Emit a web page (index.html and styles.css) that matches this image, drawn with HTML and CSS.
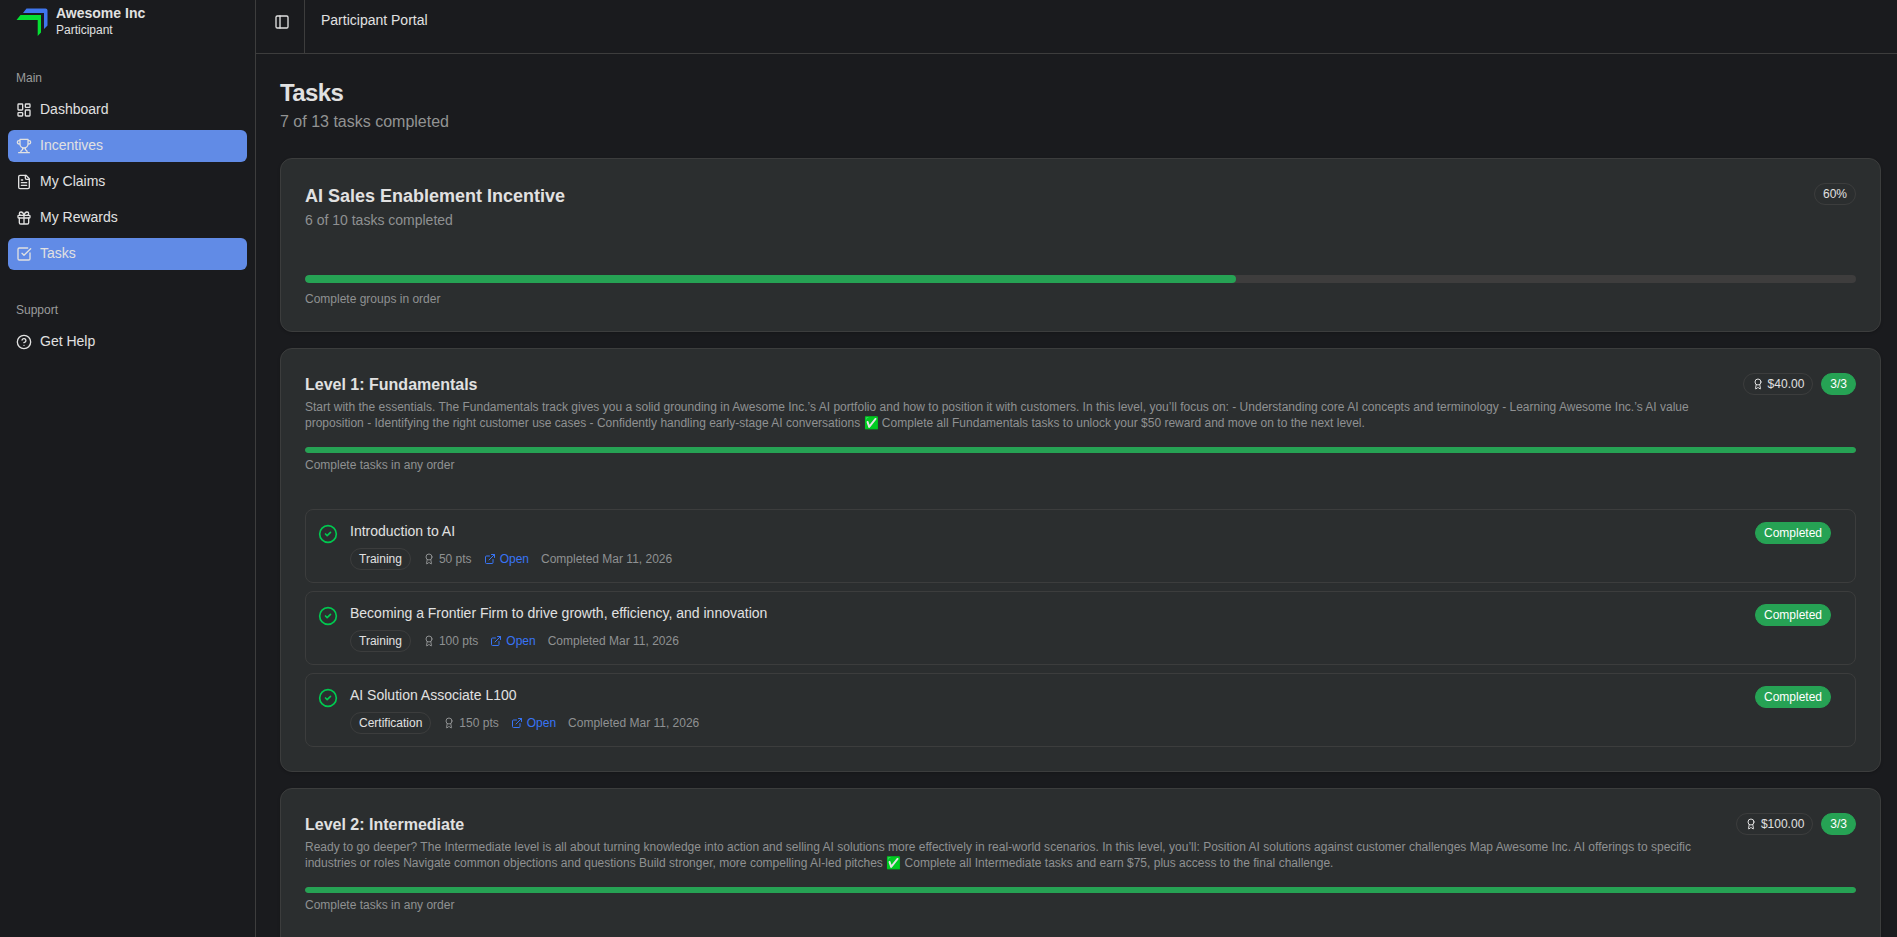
FILE: index.html
```html
<!DOCTYPE html>
<html lang="en">
<head>
    <meta charset="UTF-8">
    <meta name="viewport" content="width=device-width, initial-scale=1.0">
    <title>Tasks - Participant Portal</title>
    <link rel="stylesheet" href="styles.css">
</head>
<body>
    <svg class="sprite" aria-hidden="true">
        <symbol id="award" viewBox="0 0 24 24">
            <path d="m15.477 12.89 1.515 8.526a.5.5 0 0 1-.81.47l-3.58-2.687a1 1 0 0 0-1.197 0l-3.586 2.686a.5.5 0 0 1-.81-.469l1.514-8.526"/>
            <circle cx="12" cy="8" r="6"/>
        </symbol>
        <symbol id="external" viewBox="0 0 24 24">
            <path d="M15 3h6v6M10 14 21 3M18 13v6a2 2 0 0 1-2 2H5a2 2 0 0 1-2-2V8a2 2 0 0 1 2-2h6"/>
        </symbol>
        <symbol id="circle-check" viewBox="0 0 24 24">
            <circle cx="12" cy="12" r="10"/>
            <path d="m9 12 2 2 4-4"/>
        </symbol>
    </svg>

    <div class="layout">
        <aside class="sidebar">
            <div class="brand">
                <svg class="logo" viewBox="0 0 32 28">
                    <path d="M10.5 0.5H29.5q2 0 2 2v15L28 21V5H7z" fill="#3f76ee"/>
                    <path d="M4.5 7H25v17.5L21.7 28V12H0.5z" fill="#05df33"/>
                </svg>
                <div class="brand-text">
                    <strong>Awesome Inc</strong>
                    <span>Participant</span>
                </div>
            </div>

            <nav class="nav">
                <div class="nav-label">Main</div>
                <a class="nav-item">
                    <svg class="icon" viewBox="0 0 24 24"><rect width="7" height="9" x="3" y="3" rx="1"/><rect width="7" height="5" x="14" y="3" rx="1"/><rect width="7" height="9" x="14" y="12" rx="1"/><rect width="7" height="5" x="3" y="16" rx="1"/></svg>
                    <span>Dashboard</span>
                </a>
                <a class="nav-item active">
                    <svg class="icon" viewBox="0 0 24 24"><path d="M6 9H4.5a2.5 2.5 0 0 1 0-5H6M18 9h1.5a2.5 2.5 0 0 0 0-5H18M4 22h16M10 14.66V17c0 .55-.47.98-.97 1.21C7.85 18.75 7 20.24 7 22M14 14.66V17c0 .55.47.98.97 1.21C16.15 18.75 17 20.24 17 22M18 2H6v7a6 6 0 0 0 12 0V2Z"/></svg>
                    <span>Incentives</span>
                </a>
                <a class="nav-item">
                    <svg class="icon" viewBox="0 0 24 24"><path d="M15 2H6a2 2 0 0 0-2 2v16a2 2 0 0 0 2 2h12a2 2 0 0 0 2-2V7Z"/><path d="M14 2v4a2 2 0 0 0 2 2h4M10 9H8M16 13H8M16 17H8"/></svg>
                    <span>My Claims</span>
                </a>
                <a class="nav-item">
                    <svg class="icon" viewBox="0 0 24 24"><rect x="3" y="8" width="18" height="4" rx="1"/><path d="M12 8v13M19 12v7a2 2 0 0 1-2 2H7a2 2 0 0 1-2-2v-7M7.5 8a2.5 2.5 0 0 1 0-5A4.8 8 0 0 1 12 8a4.8 8 0 0 1 4.5-5 2.5 2.5 0 0 1 0 5"/></svg>
                    <span>My Rewards</span>
                </a>
                <a class="nav-item active">
                    <svg class="icon" viewBox="0 0 24 24"><path d="M21 10.5V19a2 2 0 0 1-2 2H5a2 2 0 0 1-2-2V5a2 2 0 0 1 2-2h12.5"/><path d="m9 11 3 3L22 4"/></svg>
                    <span>Tasks</span>
                </a>
            </nav>

            <nav class="nav">
                <div class="nav-label">Support</div>
                <a class="nav-item">
                    <svg class="icon" viewBox="0 0 24 24"><circle cx="12" cy="12" r="10"/><path d="M9.09 9a3 3 0 0 1 5.83 1c0 2-3 3-3 3M12 17h.01"/></svg>
                    <span>Get Help</span>
                </a>
            </nav>
        </aside>

        <main class="main">
            <header class="topbar">
                <button class="toggle">
                    <svg class="icon" viewBox="0 0 24 24"><rect width="18" height="18" x="3" y="3" rx="2"/><path d="M9 3v18"/></svg>
                </button>
                <span class="portal-name">Participant Portal</span>
            </header>

            <div class="content">
                <h1>Tasks</h1>
                <p class="subtitle">7 of 13 tasks completed</p>

                <section class="card summary">
                    <div class="card-header">
                        <div>
                            <h2>AI Sales Enablement Incentive</h2>
                            <p class="summary-count">6 of 10 tasks completed</p>
                        </div>
                        <span class="badge">60%</span>
                    </div>
                    <div class="progress"><div class="progress-fill" style="width: 60%"></div></div>
                    <p class="hint">Complete groups in order</p>
                </section>

                <section class="card level">
                    <div class="card-header">
                        <div>
                            <h3>Level 1: Fundamentals</h3>
                            <p class="description">Start with the essentials. The Fundamentals track gives you a solid grounding in Awesome Inc.’s AI portfolio and how to position it with customers. In this level, you’ll focus on: - Understanding core AI concepts and terminology - Learning Awesome Inc.’s AI value proposition - Identifying the right customer use cases - Confidently handling early-stage AI conversations <span class="emoji">✅</span> Complete all Fundamentals tasks to unlock your $50 reward and move on to the next level.</p>
                        </div>
                        <div class="badges">
                            <span class="badge"><svg class="icon small"><use href="#award"/></svg>$40.00</span>
                            <span class="badge green">3/3</span>
                        </div>
                    </div>
                    <div class="progress"><div class="progress-fill" style="width: 100%"></div></div>
                    <p class="hint">Complete tasks in any order</p>

                    <div class="tasks">
                        <div class="task">
                            <svg class="icon task-check"><use href="#circle-check"/></svg>
                            <div class="task-body">
                                <div class="task-title">Introduction to AI</div>
                                <div class="task-meta">
                                    <span class="badge">Training</span>
                                    <span class="meta-item"><svg class="icon small"><use href="#award"/></svg>50 pts</span>
                                    <a class="meta-item link"><svg class="icon small"><use href="#external"/></svg>Open</a>
                                    <span>Completed Mar 11, 2026</span>
                                </div>
                            </div>
                            <span class="badge green">Completed</span>
                        </div>
                        <div class="task">
                            <svg class="icon task-check"><use href="#circle-check"/></svg>
                            <div class="task-body">
                                <div class="task-title">Becoming a Frontier Firm to drive growth, efficiency, and innovation</div>
                                <div class="task-meta">
                                    <span class="badge">Training</span>
                                    <span class="meta-item"><svg class="icon small"><use href="#award"/></svg>100 pts</span>
                                    <a class="meta-item link"><svg class="icon small"><use href="#external"/></svg>Open</a>
                                    <span>Completed Mar 11, 2026</span>
                                </div>
                            </div>
                            <span class="badge green">Completed</span>
                        </div>
                        <div class="task">
                            <svg class="icon task-check"><use href="#circle-check"/></svg>
                            <div class="task-body">
                                <div class="task-title">AI Solution Associate L100</div>
                                <div class="task-meta">
                                    <span class="badge">Certification</span>
                                    <span class="meta-item"><svg class="icon small"><use href="#award"/></svg>150 pts</span>
                                    <a class="meta-item link"><svg class="icon small"><use href="#external"/></svg>Open</a>
                                    <span>Completed Mar 11, 2026</span>
                                </div>
                            </div>
                            <span class="badge green">Completed</span>
                        </div>
                    </div>
                </section>

                <section class="card level">
                    <div class="card-header">
                        <div>
                            <h3>Level 2: Intermediate</h3>
                            <p class="description">Ready to go deeper? The Intermediate level is all about turning knowledge into action and selling AI solutions more effectively in real-world scenarios. In this level, you’ll: Position AI solutions against customer challenges Map Awesome Inc. AI offerings to specific industries or roles Navigate common objections and questions Build stronger, more compelling AI-led pitches <span class="emoji">✅</span> Complete all Intermediate tasks and earn $75, plus access to the final challenge.</p>
                        </div>
                        <div class="badges">
                            <span class="badge"><svg class="icon small"><use href="#award"/></svg>$100.00</span>
                            <span class="badge green">3/3</span>
                        </div>
                    </div>
                    <div class="progress"><div class="progress-fill" style="width: 100%"></div></div>
                    <p class="hint">Complete tasks in any order</p>
                    <div class="tasks"></div>
                </section>
            </div>
        </main>
    </div>
</body>
</html>
```
FILE: styles.css
```css
* {
    box-sizing: border-box;
}
body {
    margin: 0;
    height: 100vh;
    overflow: hidden;
    background-color: #1a1b1e;
    color: #e1e1e1;
    font-family: "Liberation Sans", Arial, sans-serif;
    font-size: 14px;
    line-height: 20px;
}
h1, h2, h3, p {
    margin: 0;
}
.sprite {
    display: none;
}
.icon {
    width: 16px;
    height: 16px;
    flex-shrink: 0;
    fill: none;
    stroke: currentColor;
    stroke-width: 2;
    stroke-linecap: round;
    stroke-linejoin: round;
}
.icon.small {
    width: 12px;
    height: 12px;
}
.layout {
    display: flex;
    height: 100vh;
}

/* Sidebar */
.sidebar {
    width: 256px;
    flex-shrink: 0;
    padding: 0 8px;
    border-right: 1px solid #3d3d3d;
}
.brand {
    display: flex;
    gap: 8px;
    height: 62px;
    padding: 5px 8px 0;
}
.logo {
    width: 32px;
    height: 28px;
    margin-top: 3px;
}
.brand-text {
    display: flex;
    flex-direction: column;
    gap: 1px;
    line-height: 16px;
}
.brand-text span {
    font-size: 12px;
}
.nav {
    display: flex;
    flex-direction: column;
    gap: 4px;
    margin-bottom: 24px;
}
.nav-label {
    height: 32px;
    padding: 0 8px;
    margin-bottom: -4px;
    font-size: 12px;
    line-height: 32px;
    color: #9a9b9c;
}
.nav-item {
    display: flex;
    align-items: center;
    gap: 8px;
    height: 32px;
    padding: 0 8px;
    border-radius: 6px;
}
.nav-item span {
    padding-bottom: 2px;
}
.nav-item.active {
    background-color: #618be6;
}

/* Header */
.main {
    flex: 1;
    min-width: 0;
}
.topbar {
    display: flex;
    height: 54px;
    border-bottom: 1px solid #3d3d3d;
}
.toggle {
    display: flex;
    width: 49px;
    padding: 14px 0 0 18px;
    border: none;
    border-right: 1px solid #3d3d3d;
    background: none;
    color: inherit;
}
.portal-name {
    padding: 10px 16px;
}

/* Page */
.content {
    padding: 24px 16px 0 24px;
}
h1 {
    padding-bottom: 2px;
    font-size: 24px;
    line-height: 30px;
    letter-spacing: -0.6px;
}
.subtitle {
    margin: 0 0 24px;
    font-size: 16px;
    line-height: 24px;
    color: #929393;
}
.card {
    margin-bottom: 16px;
    padding: 24px;
    border: 1px solid #3c3d3d;
    border-radius: 12px;
    background-color: #2b2e2f;
    box-shadow: 0 1px 3px rgba(0, 0, 0, 0.2);
}
.summary {
    height: 174px;
}
.card-header {
    display: flex;
    justify-content: space-between;
    align-items: flex-start;
    gap: 8px;
}
h2 {
    margin-bottom: 1px;
    font-size: 18px;
    line-height: 26px;
}
h3 {
    margin-bottom: 2px;
    font-size: 16px;
    line-height: 24px;
}
.summary-count {
    color: #8f9192;
}
.description {
    font-size: 12px;
    line-height: 16px;
    letter-spacing: 0.008px;
    color: #8f9192;
}
.emoji {
    display: inline-block;
    height: 16px;
    vertical-align: top;
    filter: hue-rotate(35deg) saturate(2.2) brightness(0.9);
}
.badges {
    display: flex;
    gap: 8px;
    flex-shrink: 0;
}
.badge {
    display: inline-flex;
    align-items: center;
    gap: 4px;
    height: 22px;
    padding: 0 8px;
    border: 1px solid #3c3d3d;
    border-radius: 11px;
    color: #e1e1e1;
    font-size: 12px;
    line-height: 16px;
    white-space: nowrap;
}
.badge.green {
    border-color: #26a254;
    background-color: #26a254;
    color: #fff;
}
.progress {
    height: 6px;
    overflow: hidden;
    border-radius: 4px;
    background-color: #3e3d3d;
}
.progress-fill {
    height: 100%;
    border-radius: 4px;
    background-color: #26a254;
}
.summary .progress {
    height: 8px;
    margin-top: 45px;
}
.level .progress {
    margin-top: 16px;
}
.hint {
    margin-top: 4px;
    font-size: 12px;
    line-height: 16px;
    color: #8f9192;
}
.summary .hint {
    margin-top: 8px;
}

/* Task rows */
.tasks {
    display: flex;
    flex-direction: column;
    gap: 8px;
    margin-top: 36px;
}
.task {
    display: flex;
    align-items: flex-start;
    gap: 12px;
    height: 74px;
    padding: 12px 24px 12px 12px;
    border: 1px solid #3c3d3d;
    border-radius: 8px;
}
.task-check {
    width: 20px;
    height: 20px;
    margin-top: 2px;
    color: #00c950;
}
.task-body {
    flex: 1;
}
.task-title {
    margin-bottom: 8px;
    line-height: 18px;
}
.task-meta {
    display: flex;
    align-items: center;
    gap: 12px;
    font-size: 12px;
    line-height: 16px;
    color: #8f9192;
}
.meta-item {
    display: flex;
    align-items: center;
    gap: 4px;
}
.link {
    color: #3874f5;
}
```
